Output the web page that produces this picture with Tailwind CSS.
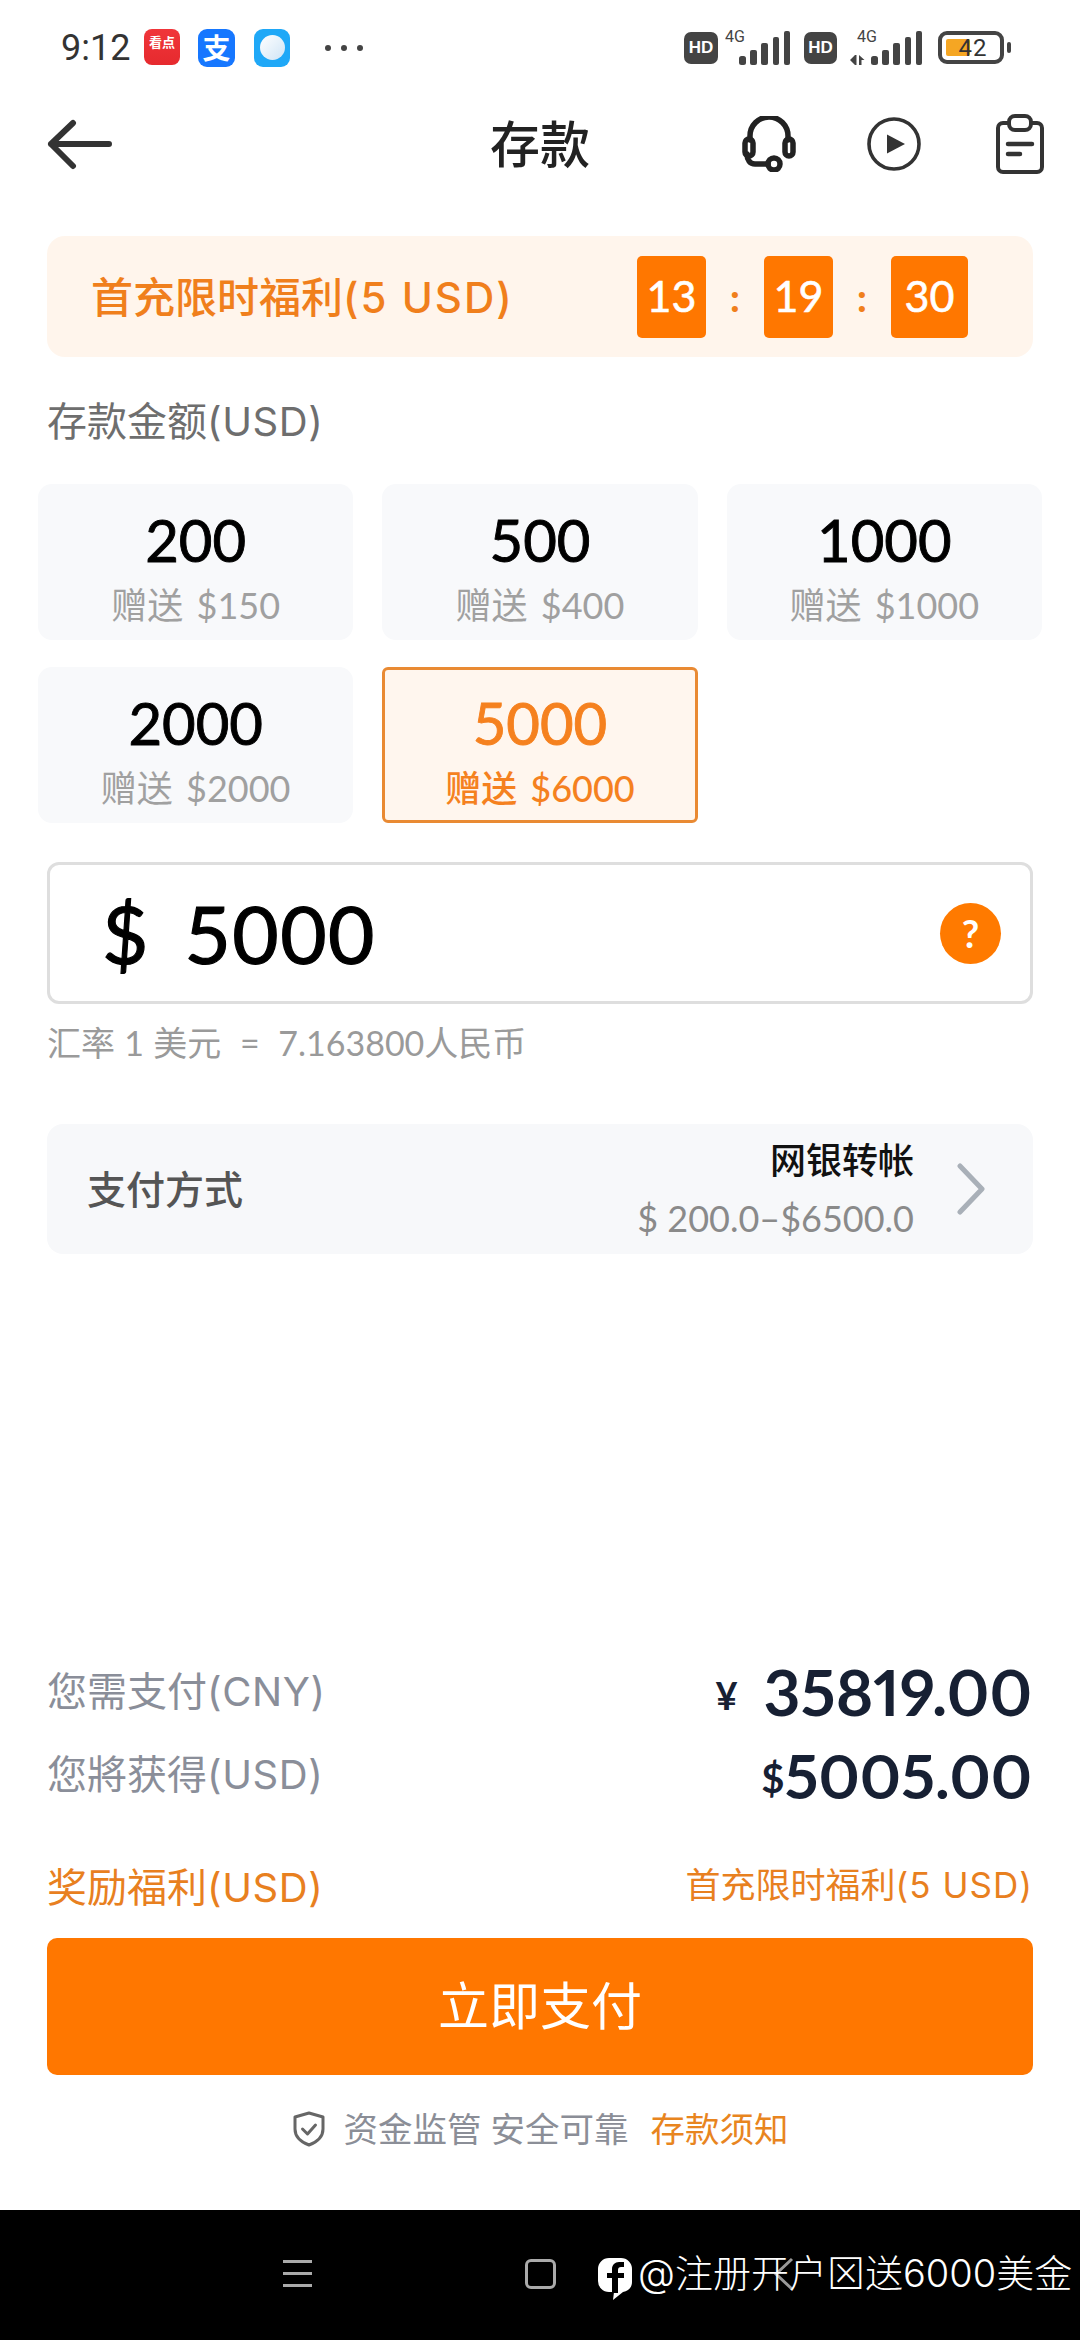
<!DOCTYPE html>
<html lang="zh"><head><meta charset="utf-8">
<script src="https://cdn.jsdelivr.net/npm/@tailwindcss/browser@4"></script>
</head>
<body class="m-0 bg-white">
<div class="w-[1080px] h-[2340px] flex flex-col overflow-hidden bg-white font-['Lato','Noto_Sans_CJK_SC',sans-serif]">

  <!-- status bar -->
  <div class="h-[96px] flex items-center text-[#333]">
    <span class="ml-[61px] font-['Roboto',sans-serif] text-[36px] w-[83px]">9:12</span>
    <div class="w-[36px] h-[36px] rounded-[8px] bg-gradient-to-b from-[#f0353a] to-[#e62a2e] flex justify-center pt-[3px] text-white text-[13px] leading-[20px] font-bold -mt-[2px]">看点</div>
    <div class="ml-[18px] w-[37px] h-[38px] rounded-[9px] bg-[#1677ff] flex items-center justify-center text-white text-[28px] leading-none font-bold">支</div>
    <div class="ml-[19px] w-[36px] h-[38px] rounded-[9px] bg-[#1fa8f7] flex items-center justify-center">
      <div class="w-[25px] h-[25px] rounded-full bg-gradient-to-br from-white to-[#cfe4f5]"></div>
    </div>
    <div class="ml-[35px] flex gap-[10px]">
      <div class="w-[6px] h-[6px] rounded-full bg-[#444]"></div>
      <div class="w-[6px] h-[6px] rounded-full bg-[#444]"></div>
      <div class="w-[6px] h-[6px] rounded-full bg-[#444]"></div>
    </div>
    <div class="ml-auto flex items-center">
      <div class="w-[34px] h-[32px] rounded-[7px] bg-[#444] text-white text-[17px] font-bold font-['Liberation_Sans',sans-serif] flex items-center justify-center">HD</div>
      <svg class="ml-[7px]" width="66" height="40" viewBox="0 0 66 40"><text x="0" y="14" font-size="16" fill="#444" font-family="Roboto">4G</text><g fill="#444"><rect x="14" y="28" width="7" height="9" rx="2.5"/><rect x="25" y="22" width="7" height="15" rx="2"/><rect x="36" y="15" width="7" height="22" rx="2"/><rect x="48" y="9" width="6" height="28" rx="2"/><rect x="59" y="3" width="6" height="34" rx="2"/></g></svg>
      <div class="ml-[13px] w-[33px] h-[32px] rounded-[7px] bg-[#444] text-white text-[17px] font-bold font-['Liberation_Sans',sans-serif] flex items-center justify-center">HD</div>
      <svg class="ml-[13px]" width="73" height="40" viewBox="0 0 73 40"><text x="7" y="14" font-size="16" fill="#444" font-family="Roboto">4G</text><g fill="#444"><path d="M5 27v10l-5-5zM9 27v10h2.500v-5h3z"/><rect x="5" y="27" width="1.500" height="10"/><rect x="21" y="28" width="7" height="9" rx="2.5"/><rect x="32" y="22" width="7" height="15" rx="2"/><rect x="43" y="15" width="7" height="22" rx="2"/><rect x="55" y="9" width="6" height="28" rx="2"/><rect x="66" y="3" width="6" height="34" rx="2"/></g></svg>
      <div class="ml-[15px] w-[66px] h-[33px] rounded-[9px] border-[4px] border-[#444] relative flex items-center justify-center font-['Roboto',sans-serif] text-[24px] leading-none text-[#333]">
        <div class="absolute left-[4px] top-[4px] w-[24px] h-[17px] bg-[#f5a623] rounded-[2px]"></div>
        <span class="relative pl-[4px] tracking-[1px]">42</span>
      </div>
      <div class="ml-[3px] w-[4px] h-[11px] rounded-[2px] bg-[#444] mr-[69px]"></div>
    </div>
  </div>

  <!-- header -->
  <div class="h-[98px] flex items-center relative">
    <svg class="ml-[46px]" width="66" height="52" viewBox="0 0 66 52" fill="none" stroke="#333" stroke-width="6" stroke-linecap="round" stroke-linejoin="round"><path d="M5 26h58M27 5L5 26l22 22"/></svg>
    <span class="absolute left-0 right-0 text-center text-[50px] leading-[60px] font-medium text-[#222]">存款</span>
    <div class="ml-auto flex items-center">
      <svg width="54" height="56" viewBox="0 0 54 56" fill="none" stroke="#222" stroke-width="5.500" stroke-linecap="round"><path d="M8 24v-4a19 19 0 0 1 38 0v4"/><rect x="3" y="23" width="8" height="17" rx="4"/><rect x="43" y="23" width="8" height="17" rx="4"/><path d="M5 38c0 6 3 10 8 10h13"/><circle cx="32" cy="48" r="6"/></svg>
      <svg class="ml-[70px]" width="56" height="56" viewBox="0 0 56 56" fill="none"><circle cx="28" cy="28" r="25" stroke="#333" stroke-width="3.6"/><path d="M21 18.500l18 9.500-18 9.500z" fill="#333"/></svg>
      <svg class="ml-[73px] mr-[35px]" width="50" height="62" viewBox="0 0 50 62" fill="none" stroke="#333" stroke-width="4" stroke-linejoin="round" stroke-linecap="round"><path d="M14 10H8a5 5 0 0 0-5 5v39a5 5 0 0 0 5 5h34a5 5 0 0 0 5-5V15a5 5 0 0 0-5-5h-6"/><rect x="14" y="3" width="22" height="14" rx="6"/><path d="M13 31h24M13 41h12" stroke-width="4.500"/></svg>
    </div>
  </div>

  <div class="px-[47px] flex flex-col flex-1">
    <!-- banner -->
    <div class="mt-[43px] h-[121px] rounded-[18px] bg-[#fff5ec] flex items-center pl-[44px]">
      <span class="font-['Inter','Noto_Sans_CJK_SC',sans-serif] text-[42px] font-medium text-[#f07f1c] w-[546px] mt-[2px]">首充限时福利<span class="tracking-[2px]">(5 USD)</span></span>
      <div class="w-[69px] h-[82px] rounded-[5px] bg-[#ff7700] text-white text-[43px] [-webkit-text-stroke:0.6px_white] flex items-center justify-center">13</div>
      <span class="w-[58px] text-center text-[40px] text-[#f07f1c] font-bold">:</span>
      <div class="w-[69px] h-[82px] rounded-[5px] bg-[#ff7700] text-white text-[43px] [-webkit-text-stroke:0.6px_white] flex items-center justify-center">19</div>
      <span class="w-[58px] text-center text-[40px] text-[#f07f1c] font-bold">:</span>
      <div class="w-[77px] h-[82px] rounded-[5px] bg-[#ff7700] text-white text-[43px] [-webkit-text-stroke:0.6px_white] flex items-center justify-center">30</div>
    </div>

    <div class="mt-[40px] h-[50px] leading-[50px] font-['Inter','Noto_Sans_CJK_SC',sans-serif] text-[40px] text-[#6e6e6e]">存款金额<span class="tracking-[0.6px]">(USD)</span></div>

    <!-- amounts -->
    <div class="mt-[37px] -mx-[9px] grid grid-cols-3 gap-x-[29px] gap-y-[27px]">
      <div class="h-[156px] rounded-[14px] bg-[#f8f9fb] flex flex-col items-center pt-[21px]">
        <span class="text-[58px] leading-[70px] [-webkit-text-stroke:0.9px_black] text-black">200</span>
        <span class="mt-[10px] text-[36px] leading-[40px] text-[#a0a0a0] [word-spacing:4px]">赠送 $150</span>
      </div>
      <div class="h-[156px] rounded-[14px] bg-[#f8f9fb] flex flex-col items-center pt-[21px]">
        <span class="text-[58px] leading-[70px] [-webkit-text-stroke:0.9px_black] text-black">500</span>
        <span class="mt-[10px] text-[36px] leading-[40px] text-[#a0a0a0] [word-spacing:4px]">赠送 $400</span>
      </div>
      <div class="h-[156px] rounded-[14px] bg-[#f8f9fb] flex flex-col items-center pt-[21px]">
        <span class="text-[58px] leading-[70px] [-webkit-text-stroke:0.9px_black] text-black">1000</span>
        <span class="mt-[10px] text-[36px] leading-[40px] text-[#a0a0a0] [word-spacing:4px]">赠送 $1000</span>
      </div>
      <div class="h-[156px] rounded-[14px] bg-[#f8f9fb] flex flex-col items-center pt-[21px]">
        <span class="text-[58px] leading-[70px] [-webkit-text-stroke:0.9px_black] text-black">2000</span>
        <span class="mt-[10px] text-[36px] leading-[40px] text-[#a0a0a0] [word-spacing:4px]">赠送 $2000</span>
      </div>
      <div class="h-[156px] rounded-[6px] bg-[#fff6ee] border-[3px] border-[#e98a33] flex flex-col items-center pt-[18px]">
        <span class="text-[58px] leading-[70px] [-webkit-text-stroke:0.9px_#f5811f] text-[#f5811f]">5000</span>
        <span class="mt-[10px] text-[36px] leading-[40px] font-medium text-[#f5811f] [word-spacing:4px]">赠送 $6000</span>
      </div>
    </div>

    <!-- input -->
    <div class="mt-[39px] h-[142px] rounded-[12px] border-[3px] border-[#dedede] flex items-center pl-[52px] pr-[29px]">
      <span class="text-[80px] leading-none [-webkit-text-stroke:1.2px_black] text-black">$</span>
      <span class="ml-[36px] text-[80px] leading-none tracking-[1.5px] [-webkit-text-stroke:1.2px_black] text-black">5000</span>
      <div class="ml-auto w-[61px] h-[61px] rounded-full bg-[#ff7a00] text-white text-[38px] font-bold flex items-center justify-center">?</div>
    </div>

    <div class="mt-[19px] h-[40px] leading-[40px] text-[34px] text-[#9a9a9a] whitespace-pre [word-spacing:0.6px]">汇率 1 美元  =  7.163800人民币</div>

    <!-- payment -->
    <div class="mt-[61px] h-[130px] rounded-[16px] bg-[#f7f8fa] flex items-center pl-[40px] pr-[47px]">
      <span class="text-[39px] font-medium text-[#555]">支付方式</span>
      <div class="ml-auto flex flex-col items-end">
        <span class="text-[36px] leading-[44px] font-medium text-[#111]">网银转帐</span>
        <span class="mt-[14px] text-[36px] leading-[44px] text-[#8a8a8a]">$ 200.0–$6500.0</span>
      </div>
      <svg class="ml-[42px]" width="30" height="52" viewBox="0 0 30 52" fill="none" stroke="#a9b0b8" stroke-width="5" stroke-linecap="round" stroke-linejoin="round"><path d="M4 3l22 23-22 23"/></svg>
    </div>

    <!-- summary -->
    <div class="mt-[403px] h-[70px] flex items-center justify-between">
      <span class="font-['Inter','Noto_Sans_CJK_SC',sans-serif] text-[40px] text-[#8a8e99]">您需支付<span class="tracking-[0.6px]">(CNY)</span></span>
      <div class="flex items-center pr-[1px]">
        <span class="text-[38px] font-bold text-[#172033] mt-[6px]">¥</span>
        <span class="ml-[26px] text-[64px] leading-none font-bold proportional-nums text-[#172033]">35819.00</span>
      </div>
    </div>
    <div class="mt-[13px] h-[70px] flex items-center justify-between">
      <span class="font-['Inter','Noto_Sans_CJK_SC',sans-serif] text-[40px] text-[#8a8e99]">您將获得<span class="tracking-[0.6px]">(USD)</span></span>
      <div class="flex items-center pr-[1px]">
        <span class="text-[40px] font-bold text-[#172033] mt-[6px]">$</span>
        <span class="text-[62px] leading-none font-bold proportional-nums text-[#172033]">5005.00</span>
      </div>
    </div>
    <div class="mt-[53px] h-[50px] flex items-center justify-between text-[#e8801f] font-['Inter','Noto_Sans_CJK_SC',sans-serif]">
      <span class="text-[40px]">奖励福利<span class="tracking-[0.6px]">(USD)</span></span>
      <span class="text-[35px] -mt-[6px]">首充限时福利<span class="tracking-[1px]">(5 USD)</span></span>
    </div>

    <div class="mt-[25px] h-[137px] rounded-[10px] bg-[#ff7700] flex items-center justify-center text-white text-[51px]">立即支付</div>

    <div class="mt-[29px] h-[50px] flex items-center justify-center">
      <svg width="34" height="36" viewBox="0 0 34 36" fill="none" stroke="#666" stroke-width="3" stroke-linecap="round" stroke-linejoin="round"><path d="M17 2l14 4v12c0 8-6 13-14 16C9 31 3 26 3 18V6z"/><path d="M10.500 18l5 5 8-9"/></svg>
      <span class="ml-[18px] text-[34.500px] text-[#8b8e97]">资金监管 安全可靠</span>
      <span class="ml-[22px] text-[34.500px] text-[#e8851f]">存款须知</span>
    </div>
  </div>

  <!-- nav -->
  <div class="mt-[56px] h-[130px] shrink-0 bg-black flex items-center relative">
    <div class="ml-[283px] w-[29px] flex flex-col gap-[9px] -mt-[3px]">
      <div class="h-[3px] bg-[#aaa]"></div>
      <div class="h-[3px] bg-[#aaa]"></div>
      <div class="h-[3px] bg-[#aaa]"></div>
    </div>
    <div class="ml-[213px] w-[31px] h-[30px] rounded-[6px] border-[3px] border-[#aaa] -mt-[3px]"></div>
    <svg class="absolute left-[770px] top-[46px]" width="30" height="36" viewBox="0 0 30 36" fill="none" stroke="#999" stroke-width="3"><path d="M22 3L6 18l16 15"/></svg>
    <svg class="relative ml-[41px] mt-[8px]" width="36" height="44" viewBox="0 0 36 44"><path d="M12 1h12a11 11 0 0 1 11 11v13c0 6-4 9-9 10l-10 8 1-8H12A11 11 0 0 1 1 24V12A11 11 0 0 1 12 1z" fill="#fff"/><path d="M21 36V21h6v-5h-6v-3c0-2 1-3 3-3h3V5h-5c-4 0-7 3-7 7v4h-5v5h5v15z" fill="#000"/></svg>
    <span class="relative ml-[5px] -mt-[5px] text-[38px] leading-none font-light text-white font-['Inter','Noto_Sans_CJK_SC',sans-serif] whitespace-nowrap">@注册开户⊠送6000美金</span>
  </div>
</div>
</body></html>
